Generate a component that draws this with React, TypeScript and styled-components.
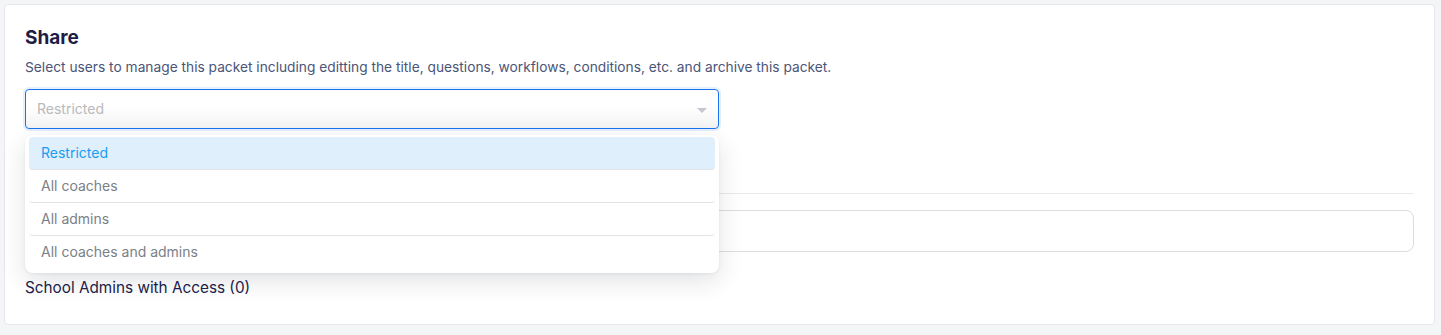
import React from 'react'
import styled, { createGlobalStyle } from 'styled-components'

const GlobalStyle = createGlobalStyle`
  html, body {
    margin: 0;
    padding: 0;
    background: #f4f5f7;
    font-family: Inter, 'Noto Sans', sans-serif;
  }
`

const Page = styled.div`
  padding: 4px 6px 9px 4px;
  width: 1441px;
  box-sizing: border-box;
`

const Card = styled.section`
  background: #fff;
  border: 1px solid #e6e8eb;
  border-radius: 4px;
  padding: 21px 20px 28px;
  height: 321px;
  box-sizing: border-box;
`

const Title = styled.h2`
  margin: 0;
  font-size: 19px;
  line-height: 24px;
  font-weight: 700;
  color: #1d1d45;
`

const Subtitle = styled.p`
  margin: 7px 0 0;
  font-size: 13.75px;
  line-height: 20px;
  color: #4b5577;
`

const SelectWrap = styled.div`
  position: relative;
  width: 694px;
  margin-top: 12px;
`

const SelectBox = styled.div`
  height: 40px;
  box-sizing: border-box;
  border: 1px solid #1a73f0;
  border-radius: 4px;
  box-shadow: 0 0 0 2px #e4f0fd;
  background: linear-gradient(180deg, #ffffff 40%, #f3f3f3 100%);
  display: flex;
  align-items: center;
  justify-content: space-between;
  padding: 0 11px;
`

const Placeholder = styled.span`
  font-size: 14px;
  color: #b9b9b9;
  margin-top: -1px;
`

const Caret = styled.span`
  width: 0;
  height: 0;
  border-left: 5px solid transparent;
  border-right: 5px solid transparent;
  border-top: 5px solid #c6c6cf;
  margin-top: 2px;
`

const Menu = styled.ul`
  position: absolute;
  top: 46px;
  left: 0;
  right: 0;
  margin: 0;
  list-style: none;
  background: #fff;
  border-radius: 8px;
  padding: 2px 4px 4px;
  box-shadow: 0 8px 24px rgba(20, 30, 50, 0.13), 0 1px 3px rgba(20, 30, 50, 0.06);
  z-index: 2;
`

const Option = styled.li<{ $active?: boolean }>`
  height: 33px;
  box-sizing: border-box;
  display: flex;
  align-items: center;
  padding: 0 12px 2px;
  font-size: 14px;
  color: ${p => (p.$active ? '#1b9cf0' : '#7b8086')};
  background: ${p => (p.$active ? '#dff0fc' : 'transparent')};
  border-radius: ${p => (p.$active ? '4px' : '0 0 4px 4px')};
  border-bottom: 1px solid #e1e3e6;

  &:last-child {
    border-bottom: none;
  }
`

const Divider = styled.hr`
  margin: 64px 0 0;
  border: none;
  border-top: 1px solid #e8e9eb;
`

const SearchBox = styled.div`
  margin-top: 16px;
  height: 42px;
  box-sizing: border-box;
  border: 1px solid #dcdde0;
  border-radius: 8px;
`

const AccessLabel = styled.div`
  margin-top: 26px;
  font-size: 15.3px;
  line-height: 20px;
  color: #22224a;
`

const options = ['Restricted', 'All coaches', 'All admins', 'All coaches and admins']

export default function App() {
  return (
    <>
      <GlobalStyle />
      <Page>
        <Card>
          <Title>Share</Title>
          <Subtitle>
            Select users to manage this packet including editting the title, questions, workflows, conditions, etc. and archive this packet.
          </Subtitle>
          <SelectWrap>
            <SelectBox>
              <Placeholder>Restricted</Placeholder>
              <Caret />
            </SelectBox>
            <Menu>
              {options.map((o, i) => (
                <Option key={o} $active={i === 0}>
                  {o}
                </Option>
              ))}
            </Menu>
          </SelectWrap>
          <Divider />
          <SearchBox />
          <AccessLabel>School Admins with Access (0)</AccessLabel>
        </Card>
      </Page>
    </>
  )
}
